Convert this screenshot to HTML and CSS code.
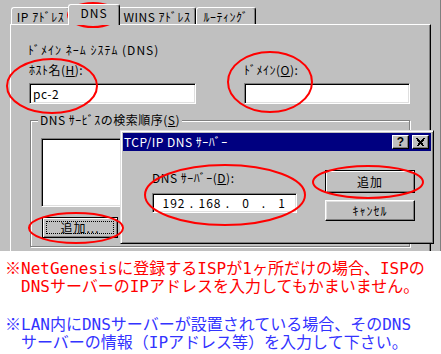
FILE: index.html
```html
<!DOCTYPE html>
<html lang="ja">
<head>
    <meta charset="UTF-8">
    <title>DNS 設定</title>
    <link rel="stylesheet" href="styles.css">
</head>
<body>
    <div class="shot">
        <div class="tabs">
            <div class="tab tab-ip">IP ｱﾄﾞﾚｽ</div>
            <div class="tab tab-active">DNS</div>
            <div class="tab tab-wins">WINS ｱﾄﾞﾚｽ</div>
            <div class="tab tab-route">ﾙｰﾃｨﾝｸﾞ</div>
        </div>

        <div class="panel">
            <div class="caption">ﾄﾞﾒｲﾝ ﾈｰﾑ ｼｽﾃﾑ (DNS)</div>
            <div class="fields">
                <div class="field field-host">
                    <div class="label">ﾎｽﾄ名(<u>H</u>):</div>
                    <div class="input">pc-2</div>
                </div>
                <div class="field field-domain">
                    <div class="label">ﾄﾞﾒｲﾝ(<u>O</u>):</div>
                    <div class="input"></div>
                </div>
            </div>

            <div class="group">
                <div class="group-title">DNS ｻｰﾋﾞｽの検索順序(<u>S</u>)</div>
                <div class="list"></div>
                <div class="group-buttons">
                    <div class="btn btn-focus"><span>追加...</span></div>
                </div>
            </div>
        </div>

        <div class="dialog">
            <div class="titlebar">
                <span class="title">TCP/IP DNS ｻｰﾊﾞｰ</span>
                <span class="tb tb-help">?</span>
                <span class="tb tb-close">
                    <svg width="9" height="8" viewBox="0 0 9 8"><path d="M1 0 L8 8 M0 0 L7 8 M8 0 L1 8 M9 0 L2 8" stroke="#000" stroke-width="1.2" shape-rendering="crispEdges"/></svg>
                </span>
            </div>
            <div class="dialog-body">
                <div class="dialog-left">
                    <div class="label">DNS ｻｰﾊﾞｰ(<u>D</u>):</div>
                    <div class="input ip">
                        <span class="ip-part">192</span><span class="ip-dot">.</span>
                        <span class="ip-part">168</span><span class="ip-dot">.</span>
                        <span class="ip-part">0</span><span class="ip-dot">.</span>
                        <span class="ip-part">1</span>
                    </div>
                </div>
                <div class="dialog-right">
                    <div class="btn btn-default">追加</div>
                    <div class="btn btn-cancel">ｷｬﾝｾﾙ</div>
                </div>
            </div>
        </div>

        <svg class="marks" width="441" height="251">
            <ellipse cx="93" cy="15" rx="25" ry="12"/>
            <ellipse cx="52" cy="86" rx="45" ry="27"/>
            <ellipse cx="270" cy="82" rx="42" ry="30"/>
            <ellipse cx="76" cy="228" rx="47" ry="15"/>
            <ellipse cx="225" cy="195" rx="80" ry="30"/>
            <ellipse cx="368" cy="182" rx="55" ry="16"/>
        </svg>
    </div>

    <div class="notes">
        <p class="note-red"><span class="kome">※</span>NetGenesisに登録するISPが1ヶ所だけの場合、ISPの<br>　DNSサーバーのIPアドレスを入力してもかまいません。</p>
        <p class="note-blue"><span class="kome">※</span>LAN内にDNSサーバーが設置されている場合、そのDNS<br>　サーバーの情報（IPアドレス等）を入力して下さい。</p>
    </div>
</body>
</html>
```

FILE: styles.css
```css
* {
    margin: 0;
    padding: 0;
    box-sizing: border-box;
}

body {
    background: #fff;
    font-family: "Noto Sans CJK JP", sans-serif;
    font-size: 12px;
    color: #000;
}

/* screenshot area */
.shot {
    position: relative;
    height: 251px;
    background: #c0c0c0;
    overflow: hidden;
    box-shadow: inset -1px 0 #808080;
}

.tabs {
    display: flex;
    align-items: flex-end;
    height: 24px;
    padding-left: 11px;
}

.tab {
    height: 17px;
    padding-top: 1px;
    line-height: 15px;
    text-align: center;
    letter-spacing: 0.5px;
    border: 1px solid;
    border-color: #fff #000 transparent #fff;
    border-bottom: 0;
    border-radius: 3px 3px 0 0;
    box-shadow: inset -1px 0 #808080;
    white-space: nowrap;
}

.tab-ip { width: 59px; }
.tab-wins { width: 78px; }
.tab-route { width: 60px; }

.tab-active {
    position: relative;
    z-index: 1;
    width: 52px;
    height: 21px;
    margin: 0 -2px -1px;
    padding-top: 0;
    background: #c0c0c0;
    letter-spacing: 1px;
}

.panel {
    margin-left: 10px;
    width: 421px;
    height: 240px;
    border-top: 1px solid #fff;
    border-left: 1px solid #fff;
    border-right: 1px solid #000;
    box-shadow: inset -1px 0 #808080;
    padding: 18px 0 0 17px;
}

.caption {
    line-height: 14px;
    letter-spacing: 1px;
}

.label {
    line-height: 14px;
    letter-spacing: 0.5px;
    white-space: nowrap;
}

.fields {
    display: flex;
    gap: 48px;
    margin-top: 6px;
    padding-left: 1px;
}

.input {
    height: 21px;
    margin-top: 6px;
    padding-left: 3px;
    line-height: 19px;
    background: #fff;
    border: 1px solid;
    border-color: #808080 #fff #fff #808080;
    box-shadow: inset 1px 1px #000, inset -1px -1px #dfdfdf;
    letter-spacing: 0.5px;
}

.field-host .input { width: 167px; }
.field-domain .input { width: 166px; }

.group {
    width: 380px;
    height: 127px;
    margin: 16px 0 0 2px;
    padding: 0 9px 0 10px;
    border: 1px solid #808080;
    box-shadow: inset 1px 1px #fff, 1px 1px #fff;
}

.group-title {
    width: fit-content;
    margin: -8px 0 0 -3px;
    padding: 0 2px;
    line-height: 14px;
    background: #c0c0c0;
    letter-spacing: 0.5px;
}

.list {
    width: 290px;
    height: 69px;
    margin-top: 11px;
    background: #fff;
    border: 1px solid;
    border-color: #808080 #fff #fff #808080;
    box-shadow: inset 1px 1px #000, inset -1px -1px #dfdfdf;
}

.group-buttons {
    display: flex;
    margin-top: 10px;
    padding-left: 1px;
}

.btn {
    width: 90px;
    height: 21px;
    line-height: 19px;
    text-align: center;
    background: #c0c0c0;
    border: 1px solid;
    border-color: #fff #000 #000 #fff;
    box-shadow: inset -1px -1px #808080, inset 1px 1px #dfdfdf;
    letter-spacing: 1px;
}

.btn-focus {
    width: 76px;
    padding: 3px;
    border-color: #000;
    box-shadow: inset 1px 1px #fff, inset -1px -1px #808080;
}

.btn-focus span {
    display: block;
    height: 13px;
    line-height: 12px;
    border: 1px dotted #000;
}

/* dialog on top */
.dialog {
    position: absolute;
    left: 120px;
    top: 130px;
    width: 314px;
    height: 114px;
    padding: 2px;
    background: #c0c0c0;
    border: 1px solid;
    border-color: #dfdfdf #000 #000 #dfdfdf;
    box-shadow: inset 1px 1px #fff, inset -1px -1px #808080;
}

.titlebar {
    display: flex;
    align-items: center;
    height: 18px;
    padding: 0 2px 0 1px;
    background: #000080;
    color: #fff;
}

.title {
    flex: 1;
    line-height: 18px;
    letter-spacing: 0.5px;
}

.tb {
    display: flex;
    align-items: center;
    justify-content: center;
    width: 17px;
    height: 14px;
    margin-left: 3px;
    background: #c0c0c0;
    color: #000;
    border: 1px solid;
    border-color: #fff #000 #000 #fff;
    box-shadow: inset -1px -1px #808080;
    font: bold 12px/12px "Liberation Sans", sans-serif;
}

.dialog-body {
    display: flex;
    padding: 20px 16px 0 29px;
}

.dialog-left .input {
    width: 145px;
    height: 20px;
    margin-top: 8px;
}

.ip {
    display: flex;
    padding-left: 8px;
    line-height: 18px;
    letter-spacing: 1px;
}

.ip-part {
    width: 26px;
    text-align: center;
}

.ip-dot {
    width: 10px;
    text-align: center;
}

.dialog-right {
    margin-left: auto;
}

.btn-default {
    height: 23px;
    margin-top: -1px;
    line-height: 21px;
    border-color: #000;
    box-shadow: inset 1px 1px #fff, inset -1px -1px #808080;
}

.btn-cancel {
    margin-top: 7px;
}

.marks {
    position: absolute;
    left: 0;
    top: 0;
    pointer-events: none;
}

.marks ellipse {
    fill: none;
    stroke: #ff0000;
    stroke-width: 2;
}

/* notes below the screenshot */
.notes {
    padding: 7px 0 0 5px;
    font: 16px/18px "DejaVu Sans Mono", "Noto Sans CJK JP", monospace;
    white-space: nowrap;
}

.kome {
    font-family: "Noto Sans CJK JP", sans-serif;
}

.note-red {
    color: #ff0000;
}

.note-blue {
    margin-top: 18px;
    color: #3333ff;
}
```
